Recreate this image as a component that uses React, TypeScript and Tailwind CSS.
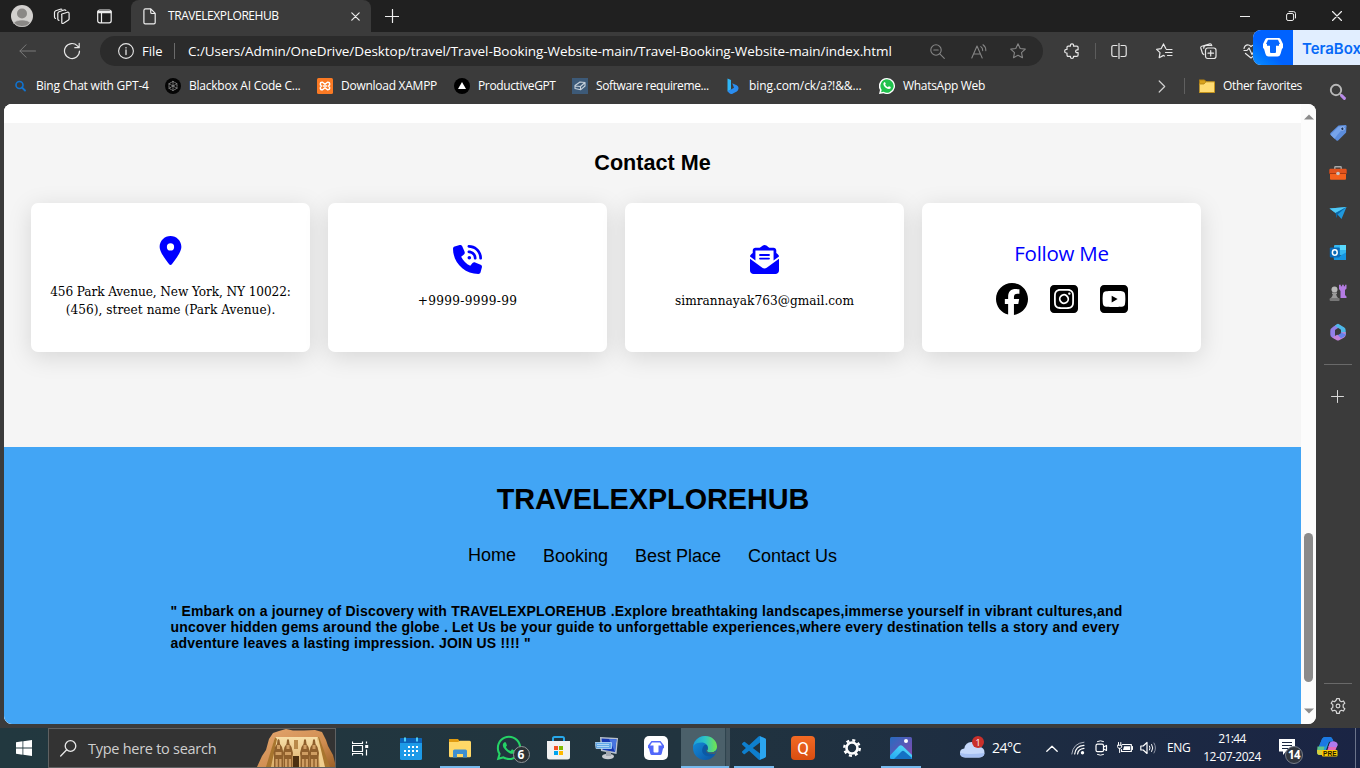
import React, { ReactNode } from "react";
import {
  FaLocationDot,
  FaPhoneVolume,
  FaEnvelopeOpenText,
  FaFacebook,
  FaSquareInstagram,
  FaSquareYoutube,
  FaWhatsapp,
} from "react-icons/fa6";

const UI = "font-['Open_Sans','Noto_Sans',sans-serif]";

type IcProps = { children: ReactNode; className?: string; s?: number; w?: number; h?: number; box?: string };

function Ic({ children, className = "", s = 16, w, h, box }: IcProps) {
  const width = w ?? s;
  const height = h ?? s;
  return (
    <svg
      width={width}
      height={height}
      viewBox={box ?? `0 0 ${width} ${height}`}
      fill="none"
      stroke="currentColor"
      strokeWidth="1"
      strokeLinecap="round"
      strokeLinejoin="round"
      className={`shrink-0 ${className}`}
    >
      {children}
    </svg>
  );
}

function TabStrip() {
  return (
    <div className="flex h-8 shrink-0 items-center bg-[#202020] text-[#eeeeee]">
      <Ic s={22} className="ml-[11px]">
        <circle cx="11" cy="11" r="11" fill="#d2d0ce" stroke="none" />
        <circle cx="11" cy="8.500" r="5" fill="#8a8886" stroke="none" />
        <path d="M2.800 18C4.500 14 17.500 14 19.200 18A11 11 0 0 1 2.800 18Z" fill="#8a8886" stroke="#d2d0ce" strokeWidth=".6" />
      </Ic>
      <Ic w={18} h={17} className="ml-[20px]">
        <path d="M9 6 14.500 4.200q1.600-.3 1.600 1.300v5.200q0 1-1 1.600l-4.600 3q-1.700.7-1.700-.9V7.200Q8.300 6.300 9 6Z" strokeWidth="1.200" />
        <path d="M6 12.300q-1.200 0-1.200-1.500V5.400q0-1.200 1.200-1.700L11 2q1.200-.4 1.800.4M2.500 10.500Q1.500 10.200 1.500 9V4.400q0-1.200 1.200-1.700L7.200 1.200q1-.3 1.600.100" strokeWidth="1.200" />
      </Ic>
      <Ic w={15} h={15} className="ml-[26px]">
        <rect x=".7" y="1" width="13.500" height="12.800" rx="2" strokeWidth="1.200" />
        <path d="M1 2.500h13M1 3.600h13M4.500 4v9.500" strokeWidth="1.200" />
      </Ic>
      <div className="ml-[19px] flex h-8 w-[240px] items-center rounded-t-[8px] bg-[#3b3b3b]">
        <Ic w={13} h={17} className="ml-[12px]">
          <path d="M2.500.9H7.800L12.200 5.400V14.500q0 1.300-1.300 1.300H2.200Q.9 15.800.9 14.500V2.400Q.9.900 2.500.9ZM7.700 1v3.200q0 1.300 1.300 1.300h3.100" strokeWidth="1.200" />
        </Ic>
        <span className="ml-[12px] w-[150px] whitespace-nowrap text-[12px] leading-4 tracking-[-0.43px] text-white">TRAVELEXPLOREHUB</span>
        <Ic s={9} className="ml-[33px]">
          <path d="m.8.8 7.400 7.400M8.200.8.8 8.200" strokeWidth="1.200" />
        </Ic>
      </div>
      <Ic s={14} className="ml-[14px]">
        <path d="M7.500 .5v13M.5 7.500h13" strokeWidth="1.200" />
      </Ic>
      <Ic w={10} h={10} className="ml-[841px]">
        <path d="M0 5.500h10" />
      </Ic>
      <Ic s={10} className="ml-[36px]">
        <rect x=".6" y="2.500" width="7" height="7" rx="1.500" />
        <path d="M3 .6h4.500q2 0 2 2V7" />
      </Ic>
      <Ic s={10} className="ml-[36px]">
        <path d="m.5.5 9 9M9.500.5l-9 9" strokeWidth="1.200" />
      </Ic>
    </div>
  );
}

function AddressRow() {
  return (
    <div className="flex h-[38px] shrink-0 items-center text-[#e6e6e6]">
      <Ic w={17} h={14} className="ml-[19px] text-[#7b7b7b]">
        <path d="M7 .8.900 7 7 13.200M1 7h15.500" />
      </Ic>
      <Ic s={18} className="ml-[27px]">
        <path d="M16.500 9A7.500 7.500 0 1 1 14.400 3.800L16 5.500M16.200 1.300v4.400h-4.400" strokeWidth="1.200" />
      </Ic>
      <div className="ml-[19px] flex h-[30px] w-[943px] items-center rounded-full bg-[#2b2b2b]">
        <Ic s={16} className="ml-[18px]">
          <circle cx="8" cy="8" r="7.400" strokeWidth="1.100" />
          <path d="M8 7v4.500M8 4.600v.3" strokeWidth="1.300" />
        </Ic>
        <span className="ml-[8px] w-[22px] whitespace-nowrap text-[13px] leading-[18px] text-white">File</span>
        <span className="ml-[10px] h-4 w-px bg-[#6b6b6b]" />
        <span className="ml-[13px] w-[742px] whitespace-nowrap text-[13.500px] leading-[18px] tracking-[-0.075px] text-white">
          C:/Users/Admin/OneDrive/Desktop/travel/Travel-Booking-Website-main/Travel-Booking-Website-main/index.html
        </span>
        <Ic s={15} className="text-[#858585]">
          <circle cx="6" cy="6" r="5.200" strokeWidth="1.100" />
          <path d="m9.800 9.800 4.500 4.500M3.800 6h4.400" strokeWidth="1.100" />
        </Ic>
        <Ic w={16} h={15} className="ml-[26px] text-[#858585]">
          <path d="M.8 14 6 2l5.200 12M2.600 10h6.800M9.800 2.600q2 1.300 1.900 4M12 .8q3 2.200 2.800 5.800" strokeWidth="1.100" />
        </Ic>
        <Ic s={16} className="ml-[23px] text-[#858585]">
          <path d="m8 .8 2.200 4.700 5.100.6-3.800 3.500 1 5.100L8 12.200l-4.500 2.500 1-5.100L.700 6.100l5.100-.6Z" strokeWidth="1.100" />
        </Ic>
      </div>
      <Ic w={15} h={16} className="ml-[21px]">
        <path d="M4.200 3.100h2.300q-.4-2.300 1.500-2.300T9.500 3.100h3.300q1.300 0 1.300 1.300v2.400h-1q-1.500 0-1.500 1.400t1.500 1.400h1V12q0 1.300-1.300 1.300H9.500q.3 2-1.500 2t-1.500-2H4.200Q3 13.300 3 12v-2Q.700 10.200.700 8.200T3 6.500V4.300q0-1.200 1.200-1.200Z" strokeWidth="1.200" />
      </Ic>
      <span className="ml-[16px] h-4 w-px bg-[#5c5c5c]" />
      <Ic w={16} h={16} className="ml-[15px]">
        <path d="M6 2.500H2.500Q.8 2.500.8 4.200v7.600q0 1.700 1.700 1.700H6M10 2.500h3.500q1.700 0 1.700 1.700v7.600q0 1.700-1.700 1.700H10M8 .5v15" strokeWidth="1.200" />
      </Ic>
      <Ic w={17} h={16} className="ml-[29px]">
        <path d="M9.800 5.600 7.500.9 5.200 5.600.6 6.300 4 9.700l-.8 5 4.300-2.300 1 .6M10.500 6.500H16M9.500 9.500H16M11.500 12.500H16" strokeWidth="1.200" />
      </Ic>
      <Ic w={17} h={17} className="ml-[27px]">
        <rect x="5.500" y="5" width="10.500" height="10.500" rx="2.200" strokeWidth="1.200" />
        <path d="M10.700 7.500v5.500M8 10.200h5.500M3.800 11.500 2.500 10.500.8 5q-.3-1.300 1-1.700L10 .9q1.300-.2 1.800 1.700M3.700 5.200q0-2.700 2.600-2.700h5.500" strokeWidth="1.200" />
      </Ic>
      <Ic w={16} h={15} className="ml-[26px]">
        <path d="M1 6.500h3L6 4l3 6.500L11 7h4M2.500 9.500 8 14l5.500-4.500M1 4.500Q2 .5 5.500 1 7 1.200 8 2.600 9 1.200 11 1q4 .5 4 4" strokeWidth="1.200" />
      </Ic>
    </div>
  );
}

function Bookmark({ icon, label, w, t }: { icon: ReactNode; label: string; w: string; t: string }) {
  return (
    <div className={`flex shrink-0 items-center ${w}`}>
      <span className="flex w-4 shrink-0 items-center justify-center">{icon}</span>
      <span className={`ml-[8px] whitespace-nowrap text-[12px] leading-4 text-white ${t}`}>{label}</span>
    </div>
  );
}

function BookmarkRow() {
  return (
    <div className="flex h-[34px] shrink-0 items-center pb-[2px] pl-[12px]">
      <Bookmark w="w-[153px]" t="tracking-[-0.22px]" label="Bing Chat with GPT-4" icon={
        <Ic s={12} className="text-[#1173cf]"><circle cx="5.500" cy="5" r="3.500" strokeWidth="1.600" /><path d="m8 7.500 3 3" strokeWidth="1.800" /></Ic>
      } />
      <Bookmark w="w-[152px]" t="tracking-[-0.24px]" label="Blackbox AI Code C..." icon={
        <Ic s={16}><circle cx="8" cy="8" r="8" fill="#050505" stroke="none" /><path d="M8 3.500 12 5.700v4.600L8 12.500 4 10.300V5.700ZM4 5.700l4 2.300 4-2.300M8 8v4.500M8 3.500V8l4 2.300M8 8l-4 2.300" stroke="#999" strokeWidth=".8" strokeDasharray="1 1" /></Ic>
      } />
      <Bookmark w="w-[137px]" t="tracking-[-0.26px]" label="Download XAMPP" icon={
        <Ic s={16}><rect width="16" height="16" rx="1.500" fill="#fb7a24" stroke="none" /><path d="M5 4.200H5.500L8 6.300l2.500-2.100h.5q1.700 0 1.700 1.700 0 1.300-1.200 2.100 1.200.8 1.200 2.100 0 1.700-1.700 1.700h-.5L8 9.700l-2.500 2.100H5q-1.700 0-1.700-1.700Q3.300 8.800 4.500 8 3.300 7.200 3.300 5.900 3.300 4.200 5 4.200Z" stroke="#fff" strokeWidth="1.500" /><path d="M6.200 8h3.600" stroke="#fff" strokeWidth="1.300" /></Ic>
      } />
      <Bookmark w="w-[118px]" t="tracking-[-0.37px]" label="ProductiveGPT" icon={
        <Ic s={16}><circle cx="8" cy="8" r="8" fill="#000" stroke="none" /><path d="m8 4 4 7H4Z" fill="#fff" stroke="none" /></Ic>
      } />
      <Bookmark w="w-[153px]" t="tracking-[-0.4px]" label="Software requireme..." icon={
        <Ic s={16}><rect width="16" height="16" fill="#3d5a78" stroke="none" /><path d="M3 7.500 8 4l5 .5-4.500 4L3 8ZM3 8v2.500l5.500 1.300L13 8V4.500M8.500 8.500v3" stroke="#c8d2dc" strokeWidth="1.100" /></Ic>
      } />
      <Bookmark w="w-[154px]" t="tracking-[-0.08px]" label="bing.com/ck/a?!&&..." icon={
        <Ic s={16}><path d="M2.500.5 6 2v9.500l-3.500 2Z" fill="#2fb6f6" stroke="none" /><path d="m7.200 5.200 4.500 2.100q2 1 1.800 3.200-.2 2-1.700 2.900L7 16q-2.500.5-4.500-3L6 11.500l3-1.800Z" fill="#2a8df0" stroke="none" /></Ic>
      } />
      <Bookmark w="w-[270px]" t="tracking-[-0.3px]" label="WhatsApp Web" icon={
        <Ic s={16}><path d="M8 0a8 8 0 1 1-3.500 15.200L0 16l1-4A8 8 0 0 1 8 0Z" fill="#fff" stroke="none" /><path d="M8 1.300A6.700 6.700 0 1 1 4.600 13.800L2 14.300l.7-2.400A6.700 6.700 0 0 1 8 1.300Z" fill="#1fc24c" stroke="none" /><path d="M5 4.500q.8-.8 1.200 0l.6 1.300-.7 1q1 1.900 2.800 2.500l.9-1q.3-.3 2 .8.200 1.800-1.700 2Q6.800 11 4.700 7.300q-.9-1.700.3-2.800Z" fill="#fff" stroke="none" /></Ic>
      } />
      <Ic w={8} h={13} className="ml-[9px] text-[#d0d0d0]"><path d="m1.200 1 5.500 5.500L1.200 12" strokeWidth="1.200" /></Ic>
      <span className="ml-[18px] h-4 w-px bg-[#606060]" />
      <Ic s={16} className="ml-[14px]">
        <path d="M.5 2h5l1.500 1.500V6H.5Z" fill="#d9a21d" stroke="#b88410" />
        <path d="M.5 6H5l2-2.200h8.500V14.500H.5Z" fill="#ffdc73" stroke="#c4941d" />
      </Ic>
      <span className="ml-[8px] whitespace-nowrap text-[12px] leading-4 tracking-[-0.36px] text-white">Other favorites</span>
    </div>
  );
}

function TeraBadge() {
  return (
    <div className="absolute left-[1253px] top-[30px] flex h-[35px] w-[107px] overflow-hidden rounded-l-[8px] bg-[#e1eeff]">
      <div className="flex w-10 shrink-0 items-center justify-center bg-linear-to-tr from-[#1590ff] to-[#0062ff] to-40%">
        <Ic w={20} h={19}>
          <path d="M4.500 0h11q1.500 0 2.200 1.300L20 6v3.500q0 1-1 1.200L17.500 16q-.7 2.500-3 2.500h-9q-2.300 0-3-2.500L1 10.700Q0 10.500 0 9.500V6l2.300-4.700Q3 0 4.500 0Z" fill="#fff" stroke="none" />
          <path d="M5 1.800h10l2 4.200H3Z" fill="#0567ff" stroke="none" />
          <path d="M4 6h12v1.800h-3V14q0 1-1 1H8q-1 0-1-1V7.800H4Z" fill="#0567ff" stroke="none" />
        </Ic>
      </div>
      <span className="ml-[9px] whitespace-nowrap pt-[9px] font-['Inter',sans-serif] text-[15px] font-semibold leading-5 tracking-[-0.05px] text-[#0669f7]">TeraBox</span>
    </div>
  );
}

const card = "flex h-[149px] w-[279px] shrink-0 flex-col items-center rounded-[7px] bg-white shadow-[0_5px_25px_rgba(0,0,0,0.13)]";
const serif = "font-['DejaVu_Serif_Condensed','DejaVu_Serif','Liberation_Serif',serif]";

function Site() {
  return (
    <main className="flex min-w-0 flex-1 flex-col bg-white text-black">
      <div className="h-[19px] shrink-0 bg-white" />
      <section className="flex h-[324px] shrink-0 flex-col bg-[#f5f5f5]">
        <h2 className="mt-[27px] text-center font-['Liberation_Sans',sans-serif] text-[21.600px] font-bold leading-[26px]">Contact Me</h2>
        <div className="mt-[27px] flex gap-[18px] pl-[27px]">
          <div className={card}>
            <FaLocationDot size={29} color="#0000ff" className="mt-[33px]" />
            <p className={`mt-[17px] whitespace-nowrap text-center text-[13.500px] leading-[18px] tracking-[-0.09px] ${serif}`}>
              456 Park Avenue, New York, NY 10022:<br />
              <span className="tracking-[0.04px]">(456), street name (Park Avenue).</span>
            </p>
          </div>
          <div className={card}>
            <FaPhoneVolume size={29} color="#0000ff" className="mt-[42px]" />
            <p className={`mt-[17px] text-[13.500px] leading-[18px] tracking-[0.3px] ${serif}`}>+9999-9999-99</p>
          </div>
          <div className={card}>
            <FaEnvelopeOpenText size={29} color="#0000ff" className="mt-[42px]" />
            <p className={`mt-[17px] text-[13.500px] leading-[18px] tracking-[0.04px] ${serif}`}>simrannayak763@gmail.com</p>
          </div>
          <div className={card}>
            <h3 className={`mt-[36px] text-[20.500px] leading-7 tracking-[-0.25px] text-[#0000ff] ${UI}`}>Follow Me</h3>
            <div className="mt-[16px] flex h-8 items-center pl-[2px]">
              <FaFacebook size={32} />
              <FaSquareInstagram size={32} className="ml-[20px]" />
              <FaSquareYoutube size={32} className="ml-[18px]" />
            </div>
          </div>
        </div>
      </section>
      <footer className="flex flex-1 flex-col bg-[#42a5f5] font-['Liberation_Sans',sans-serif]">
        <h1 className="mt-[35px] pl-px text-center text-[28.800px] font-bold leading-[34px] tracking-[-0.04px]">TRAVELEXPLOREHUB</h1>
        <nav className="mt-[28px] flex justify-center gap-[27px] text-[18px] leading-[22px]">
          <a>Home</a>
          <a className="pt-px">Booking</a>
          <a className="pt-px">Best Place</a>
          <a className="pt-px">Contact Us</a>
        </nav>
        <p className="mt-[36px] whitespace-nowrap pl-[166.500px] text-[14px] font-bold leading-4 tracking-[0.2px]">
          " Embark on a journey of Discovery with TRAVELEXPLOREHUB .Explore breathtaking landscapes,immerse yourself in vibrant cultures,and<br />
          uncover hidden gems around the globe . Let Us be your guide to unforgettable experiences,where every destination tells a story and every<br />
          adventure leaves a lasting impression. JOIN US !!!! "
        </p>
      </footer>
    </main>
  );
}

function Scrollbar() {
  return (
    <div className="flex w-[15px] shrink-0 flex-col items-center bg-[#fcfcfc]">
      <Ic w={10} h={6} className="mt-[10px]"><path d="M5 .5 10 5.500H0Z" fill="#8b8b8b" stroke="none" /></Ic>
      <div className="mt-[413px] h-[149px] w-[9px] rounded-full bg-[#8b8b8b]" />
      <Ic w={10} h={6} className="mt-[26px]"><path d="M0 .5h10L5 5.500Z" fill="#8b8b8b" stroke="none" /></Ic>
    </div>
  );
}

function Side({ children }: { children: ReactNode }) {
  return <div className="flex h-10 shrink-0 items-center justify-center">{children}</div>;
}

function Sidebar() {
  return (
    <aside className="flex w-11 shrink-0 flex-col text-[#d8d8d8]">
      <div className="-mt-[32px]" />
      <Side>
        <Ic s={18}><circle cx="7" cy="7" r="5.200" stroke="#b9b9b9" strokeWidth="1.900" /><path d="m11 11 2 2" stroke="#aaa" strokeWidth="1.800" /><path d="m12.600 12.600 2.800 2.800" stroke="#b98bea" strokeWidth="3" /></Ic>
      </Side>
      <Side>
        <Ic s={18} className="mt-px"><path d="M9.500 1.500 16.500 1q1 0 1 1.200l-.4 6.300-8 8q-.8.700-1.600 0L1.500 10.700q-.7-.8 0-1.600Z" fill="#5c8ddc" stroke="none" /><path d="m1.500 10.700 8-8 7-1L8.300 11l-2.800 3.700Z" fill="#77a4ea" stroke="none" /><circle cx="13.500" cy="4.800" r="1.700" fill="#16305c" stroke="#a7c8ff" strokeWidth=".8" /></Ic>
      </Side>
      <Side>
        <Ic s={18} className="mt-[2px]"><path d="M5.800 5V3.500Q5.800 2.800 6.500 2.800h5q.7 0 .7.700V5" stroke="#a9a9a9" strokeWidth="1.400" /><rect x=".3" y="4.800" width="17.400" height="4.700" rx="1.200" fill="#e0531e" stroke="none" /><path d="M1 9.500h16V14.700q0 1-1 1H2q-1 0-1-1Z" fill="#f4611d" stroke="none" /><path d="M.5 9.500h17" stroke="#a83a12" /><circle cx="9" cy="9.500" r="1.800" fill="#c7c7c7" stroke="none" /></Ic>
      </Side>
      <Side>
        <Ic s={18} className="mt-px"><path d="M.5 4.500 17.500 3 12.500 15 8.500 10.500Z" fill="#2098dc" stroke="none" /><path d="M.5 4.500 17.500 3 6.500 9Z" fill="#50c8f4" stroke="none" /><path d="m6.500 9 11-6-9 7.500-1 3.800Z" fill="#0968a9" stroke="none" /></Ic>
      </Side>
      <Side>
        <Ic s={18} className="mt-[2px]"><rect x="5" y="1" width="12" height="10" rx="1" fill="#35b8f1" stroke="none" /><path d="M11 1h6v5h-6Z" fill="#58d9fd" stroke="none" /><path d="M4 8.500 10.500 12 17 8.500V16H5Z" fill="#1595e2" stroke="none" /><rect x=".8" y="3.500" width="10" height="10" rx="1" fill="#0969b7" stroke="none" /><ellipse cx="5.800" cy="8.500" rx="2.400" ry="2.700" stroke="#fff" strokeWidth="1.500" /></Ic>
      </Side>
      <Side>
        <Ic s={18} className="mt-px"><circle cx="5.500" cy="5.500" r="3" fill="#b8b8b8" stroke="none" /><path d="M3 8.500h5v1.400H7.200q0 2 1.800 4H2q1.800-2 1.800-4H3Z" fill="#999" stroke="none" /><rect x=".6" y="14" width="10" height="3" rx="1" fill="#777" stroke="none" /><path d="M10 .8h1.800v1.500h1.300V.8h1.700v1.500h1.300V.8H17.500V4.500L16 6v5l1.500 1.500V14h-6V7L10 5Z" fill="#b47ce3" stroke="none" /></Ic>
      </Side>
      <Side>
        <Ic s={18}><path d="M9 .8 4.500 3.400Q1.300 5.300 1.300 8v3.500q0 2 1.800 3l2.900 1.200V7L12 3Z" fill="#9280e8" stroke="none" /><path d="m9 .8 6 3.500q1.700 1 1.700 3V12l-4.700-2.500V6.800L7 3.500 6 2.500Z" fill="#4db8e8" stroke="none" /><path d="m3.200 14.500 8.800-5 4.700-.5v2.700q0 1.800-1.500 2.700l-5 2.800q-1.200.6-2.500 0Z" fill="#c383d9" stroke="none" /><path d="m12 9.500 4.700 1.700q-.4 1.600-1.700 2.500l-3 1.500-3.500-3.500Z" fill="#6482ec" stroke="none" /><path d="M6.300 7.500 9 6l2.700 1.500v3L9 12l-2.700-1.500Z" fill="#3b3b3b" stroke="none" /></Ic>
      </Side>
      <div className="ml-2 mt-[12px] h-px w-7 bg-[#696969]" />
      <Ic s={13} className="ml-[15px] mt-[25px]"><path d="M6.500.5v12M.5 6.500h12" /></Ic>
      <div className="ml-2 mt-auto h-px w-7 bg-[#696969]" />
      <Ic s={18} className="mb-[9px] ml-[13px] mt-[13px]" box="0 0 24 24">
        <path d="M9.700 3 10.200 1.200h3.600l.5 2.800 2.300 1.300 2.700-1 1.800 3.100-2.200 1.800v3.600l2.200 1.800-1.800 3.100-2.700-1-2.300 1.300-.5 2.800h-3.600L9.700 18l-2.300-1.300-2.700 1-1.800-3.100 2.200-1.800V9.200L2.900 7.400l1.800-3.100 2.700 1Z" transform="translate(0 1)" strokeWidth="1.600" />
        <circle cx="12" cy="12" r="2.500" strokeWidth="1.500" />
      </Ic>
    </aside>
  );
}

function Task({ children, bar, active }: { children: ReactNode; bar?: boolean; active?: boolean }) {
  return (
    <div className={`relative flex h-10 w-[49px] shrink-0 items-center justify-center ${active ? "bg-linear-to-r from-[#4b606a] from-90% via-[#293e48] via-91% to-[#43555f] to-93%" : ""}`}>
      {children}
      {bar && <span className="absolute bottom-0 left-[4px] h-[2px] w-10 bg-[#76b9ed]" />}
      {active && <span className="absolute bottom-0 left-0 h-[2px] w-12 bg-[#76b9ed]" />}
    </div>
  );
}

function Temple() {
  return (
    <svg width="78" height="38" viewBox="0 0 78 38" className="shrink-0">
      <defs>
        <linearGradient id="rock" x1="0" y1="0" x2="1" y2="1">
          <stop offset="0" stopColor="#e5a770" />
          <stop offset=".6" stopColor="#cf8d50" />
          <stop offset="1" stopColor="#9a5f26" />
        </linearGradient>
        <linearGradient id="wall" x2="0" y2="1">
          <stop stopColor="#f7dfa8" />
          <stop offset="1" stopColor="#dcae6a" />
        </linearGradient>
      </defs>
      <path d="M0 38 5 27l4-6 3-11 4-6 6-2 7-2 7 1.500L47 1.500l11-.5 7 2 4 8 2 6 5 9 3 12Z" fill="url(#rock)" />
      <path d="M18 8h42l6 30H10Z" fill="url(#wall)" />
      <path d="m18 8-9 30h5l6-28ZM60 8l8 30h5L62 8Z" fill="#a8752e" />
      <path d="m60 8 3 30h5L61 8Z" fill="#f0cf8f" />
      <path d="M36 27h6v11h-6Z" fill="#4c2f10" />
      <path d="M37 11h4v9h-4Z" fill="#b98a4a" />
      {[21.5, 31, 48, 57].map((x) => (
        <g key={x}>
          <path d={`M${x - 4.500} 38v-10l-.5-4 1.500-6 2-3 .5-4 1-1 1 1 .5 4 2 3 1.500 6-.5 4v10Z`} fill="#8f5f2c" />
          <path d={`M${x - 3} 38v-8h2.300v8ZM${x + 0.7} 38v-8h2.300v8ZM${x - 1.500} 16h3v4h-3ZM${x - 3} 23h6v3h-6Z`} fill="#cf9d62" />
        </g>
      ))}
    </svg>
  );
}

function Taskbar() {
  return (
    <div className="flex h-10 shrink-0 items-center bg-linear-to-r from-[#22383f] via-[#21343f] via-50% to-[#1a2444] text-white">
      <div className="flex w-12 shrink-0 justify-center">
        <svg width="16" height="16" viewBox="0 0 16 16" fill="#fff"><path d="m0 2.200 6.500-.9v6.300H0ZM7.300 1.200 16 0v7.600H7.300ZM0 8.400h6.500v6.300L0 13.800ZM7.300 8.400H16V16l-8.700-1.200Z" /></svg>
      </div>
      <div className="flex h-10 w-[288px] shrink-0 items-center overflow-hidden border border-[#5f6162] bg-[#333333]">
        <Ic s={17} className="ml-[11px] text-[#e8e8e8]"><circle cx="10.500" cy="6" r="5.300" strokeWidth="1.300" /><path d="M6.700 9.800.7 16" strokeWidth="1.300" /></Ic>
        <span className="ml-[11px] w-[169px] whitespace-nowrap pt-px text-[14.500px] leading-5 tracking-[-0.27px] text-[#cfcfcf]">Type here to search</span>
        <Temple />
      </div>
      <div className="mr-[2px] flex w-[48.500px] shrink-0 justify-center">
        <Ic w={17} h={15}><path d="M.5.5v2h10v-2M.5 14.500v-2h10v2M.5 4.500h10v6H.5ZM14.500.5v2M14.500 8.500v6" strokeWidth="1.200" strokeLinecap="butt" /><rect x="13.200" y="4" width="3" height="3" fill="#fff" stroke="none" /></Ic>
      </div>
      <Task>
        <Ic w={22} h={23}><rect y="1" width="22" height="22" rx="1.500" fill="#1d9ae8" stroke="none" /><path d="M0 2.500Q0 1 1.500 1h19Q22 1 22 2.500V6H0Z" fill="#0c62b8" stroke="none" /><path d="M5 .5v4M17 .5v4" stroke="#4dd2fb" strokeWidth="2" strokeLinecap="butt" /><path d="M8 10h10M4 14h14M4 18h10" stroke="#fff" strokeWidth="2" strokeDasharray="2 2" strokeLinecap="butt" /></Ic>
      </Task>
      <Task bar>
        <Ic w={22} h={19}><path d="M0 0h9l1.500 2H20v4H0Z" fill="#e09b10" stroke="none" /><path d="M0 3h9l2-1.200h9.500Q22 2 22 3.300V17q0 1.200-1.200 1.200H1.200Q0 18.200 0 17Z" fill="#ffd867" stroke="none" /><path d="M4 18.500V12q0-1.500 1.500-1.500h11q1.500 0 1.500 1.500v6.500h-4V15H8v3.500Z" fill="#3d8fd2" stroke="none" /></Ic>
      </Task>
      <Task>
        <FaWhatsapp size={28} color="#25d366" />
        <span className="absolute left-[28px] top-[18px] flex h-[17px] w-[17px] items-center justify-center rounded-full border border-[#8f9498] bg-[#2b3135] text-[12px] font-bold leading-none">6</span>
      </Task>
      <Task>
        <Ic w={23} h={24}><path d="M6 6V2.500Q6 1 7.500 1h8Q17 1 17 2.500V6" stroke="#28a8ea" strokeWidth="2" /><path d="M0 5h23v16q0 2.500-2.500 2.500h-18Q0 23.500 0 21Z" fill="#f1f1f1" stroke="none" /><path d="M7 10h4v4H7Z" fill="#f25022" stroke="none" /><path d="M12 10h4v4h-4Z" fill="#7fba00" stroke="none" /><path d="M7 15h4v4H7Z" fill="#00a4ef" stroke="none" /><path d="M12 15h4v4h-4Z" fill="#ffb900" stroke="none" /></Ic>
      </Task>
      <Task>
        <Ic s={24}><path d="m5 1 18 1-1.500 16L6 15Z" fill="#b8c2cf" stroke="none" /><path d="m6.500 2.500 15 .8L20 16 7.500 13.700Z" fill="#1638b2" stroke="none" /><path d="m14 3 7.500.3L20 16Z" fill="#4774df" stroke="none" /><ellipse cx="13" cy="20.500" rx="6" ry="2.700" fill="#c7cbd0" stroke="none" /><path d="M11 15h5v5h-5Z" fill="#a2a8b0" stroke="none" /><path d="M.5 6.500h16v6H1.500Z" fill="#62a9e8" stroke="#b9dcfa" strokeWidth=".8" /><path d="M2.500 8.500h12M2.500 10.500h12" stroke="#fff" strokeDasharray="1 1" strokeLinecap="butt" /></Ic>
      </Task>
      <Task>
        <Ic s={24}><rect width="24" height="24" rx="5" fill="#fff" stroke="none" /><path d="M7.500 5h9L20 9.500V12l-1 .5-1.200 5q-.3 1.500-1.800 1.500H8q-1.500 0-1.800-1.500L5 12.500 4 12V9.500Z" fill="#5268fa" stroke="none" /><path d="m8 6.500-2 3h3.500v6q0 1 1 1h3q1 0 1-1v-6H18l-2-3Z" fill="#fff" stroke="none" /></Ic>
      </Task>
      <Task active>
        <svg width="24" height="24" viewBox="0 0 24 24">
          <defs>
            <linearGradient id="et" x1="0" x2="1"><stop stopColor="#1b9cda" /><stop offset=".5" stopColor="#2ec5c5" /><stop offset="1" stopColor="#74e64a" /></linearGradient>
            <linearGradient id="eb" x2="1" y2="1"><stop stopColor="#1493df" /><stop offset="1" stopColor="#0b4fa0" /></linearGradient>
          </defs>
          <circle cx="12" cy="12" r="12" fill="url(#eb)" />
          <path d="M.3 10C1.200 4.500 6 0 12 0c7 0 12 5 12 10.500 0 4-3 6-6.300 6-2.500 0-3.700-.8-3.700-1.800 0-.8.900-1 .9-2.700C14.900 9 12.500 6.500 8.500 6.500 5 6.500 2 7.500.3 10Z" fill="url(#et)" />
          <path d="M14.900 12c0 1.700-.9 1.900-.9 2.700 0 1 1.200 1.800 3.700 1.800 2.300 0 4-.8 4.900-1.800Q21 19 18 20q-5 1-7.500-2T10 11q1.500-3 4-2Z" fill="#0c59a4" />
          <path d="M14.900 12c0 1.700-.9 1.900-.9 2.700 0 1 1.200 1.800 3.700 1.800 2.300 0 5-.8 6-2.500-.6 1.800-1.200 2.800-1.800 4Q19 17.800 16 17.500 11 16 14.900 12Z" fill="#4b606a" />
        </svg>
      </Task>
      <Task bar>
        <svg width="24" height="24" viewBox="0 0 24 24">
          <path d="M23.150 2.587L18.210.21a1.494 1.494 0 0 0-1.705.29l-9.460 8.630-4.120-3.128a.999.999 0 0 0-1.276.057L.327 7.261A1 1 0 0 0 .326 8.740L3.899 12 .326 15.260a1 1 0 0 0 .001 1.479L1.650 17.940a.999.999 0 0 0 1.276.057l4.120-3.128 9.460 8.630a1.492 1.492 0 0 0 1.704.290l4.942-2.377A1.500 1.500 0 0 0 24 20.060V3.939a1.500 1.500 0 0 0-.850-1.352zm-5.146 14.861L10.826 12l7.178-5.448v10.896z" fill="#0e7fce" />
          <path d="M18 .2 23.200 2.600Q24 3 24 4v16q0 1-.8 1.400L18 23.800Z" fill="#2ba5ef" />
        </svg>
      </Task>
      <Task>
        <span className="flex h-6 w-6 items-center justify-center rounded-[4px] bg-linear-to-b from-[#f26a24] to-[#d94d10] font-['Roboto',sans-serif] text-[17px] leading-none">Q</span>
      </Task>
      <Task>
        <Ic s={18}><circle cx="9" cy="9" r="5.500" strokeWidth="2.600" /><circle cx="9" cy="9" r="7.700" strokeWidth="2.500" strokeDasharray="3 3.050" strokeLinecap="butt" /></Ic>
      </Task>
      <Task bar>
        <svg width="22" height="22" viewBox="0 0 22 22">
          <defs>
            <linearGradient id="ph" x2="1" y2="1"><stop stopColor="#276cc0" /><stop offset=".6" stopColor="#6155b5" /><stop offset="1" stopColor="#8a4ab0" /></linearGradient>
            <linearGradient id="mt" y1="1" x2="1" y2="0"><stop stopColor="#22a6f0" /><stop offset="1" stopColor="#5be3fb" /></linearGradient>
          </defs>
          <rect width="22" height="22" rx="1.500" fill="url(#ph)" />
          <path d="m0 18.500 9-9.500q1.800-1.600 3.600 0L22 18v2.500q0 1.500-1.500 1.500h-19Q0 22 0 20.500Z" fill="url(#mt)" />
          <path d="m4 22 7.500-7.500q1.500-1.300 3 0L22 21v-.5q0 1.500-1.500 1.500Z" fill="#1471c4" />
          <circle cx="16" cy="4" r="2" fill="#fff" />
        </svg>
      </Task>
      <div className="relative ml-[34.500px] flex h-10 w-[27px] shrink-0 items-center">
        <Ic w={25} h={17} className="mt-[2px]"><path d="M5.500 16.500Q0 16.300 0 11.800 0 8 4.300 7.500 5.500 1 11.500 1q5 0 6.500 5 6.500-.3 6.500 5.500 0 4.700-5.500 5Z" fill="#c5d8fb" stroke="none" /><path d="M5.500 16.500Q0 16.300 0 12q8 2 24.500 0-.5 4.300-5.500 4.500Z" fill="#a6c0f3" stroke="none" /></Ic>
        <span className="absolute left-[12px] top-[8px] flex h-3 w-3 items-center justify-center rounded-full bg-[#c9302b] text-[9px] leading-none">1</span>
      </div>
      <span className="ml-[5px] w-[30px] shrink-0 whitespace-nowrap text-[14px] leading-5 tracking-[-0.5px]">24°C</span>
      <Ic w={12} h={7} className="ml-[24px]"><path d="m.8 6.300 5.200-5 5.200 5" strokeWidth="1.300" /></Ic>
      <Ic s={14} className="ml-[13px]"><path d="M.8 13Q2 2.200 13 1.200" stroke="#aab0bc" /><path d="M3.700 13Q4.500 5 13 4.300M6.600 13Q7 8 13 7.300" strokeWidth="1.200" /><circle cx="11.500" cy="11.800" r="1.700" fill="#fff" stroke="none" /></Ic>
      <Ic w={13} h={16} className="ml-[10px]"><path d="M2.500 1.500q3-1.500 6 0M2.500 14.500q3 1.500 6 0" /><rect x="1" y="4.200" width="7.500" height="7.500" rx="1.500" strokeWidth="1.200" /><path d="m8.500 7 3-1.500v5l-3-1.500" strokeWidth="1.200" /></Ic>
      <Ic w={16} h={12} className="ml-[9px]"><path d="M5.500 2.500h8.800v7H4.500V7.500" strokeWidth="1.200" /><path d="M7 4.200h6v3.800H6Z" fill="#fff" stroke="none" /><path d="M15.500 4.500v3M1.500.5v2.500M3.800.5v2.500M.7 3.200h4V5L3.500 6.300h-2L.700 5ZM2.600 6.500v4" /></Ic>
      <Ic w={17} h={14} className="ml-[7px]"><path d="M.8 5h2.400L7 1.500v11L3.200 9H.8Z" strokeWidth="1.200" /><path d="M9.500 5q1.200 2 0 4M11.700 3.500q2.300 3.500 0 7" /><path d="M14 2q3 5 0 10" stroke="#8c92a3" /></Ic>
      <span className="ml-[10px] w-[25px] shrink-0 text-[12px] leading-4 tracking-[-0.4px]">ENG</span>
      <div className="ml-[10px] flex w-[60px] shrink-0 flex-col items-center whitespace-nowrap text-[12px] leading-[18px] tracking-[-0.5px]">
        <span className="tracking-[-0.6px]">21:44</span>
        <span>12-07-2024</span>
      </div>
      <div className="relative ml-[17px] flex h-10 w-[26px] shrink-0 items-center">
        <Ic w={16} h={17} className="mb-[2px]"><path d="M0 0h16v12.500H7L4 16v-3.500H0Z" fill="#fff" stroke="none" /><path d="M3 3.500h10M3 6.500h10M3 9.500h6" stroke="#1c2842" strokeLinecap="butt" /></Ic>
        <span className="absolute left-[6px] top-[18px] flex h-[18px] w-[18px] items-center justify-center rounded-full border border-[#777d88] bg-[#30353e] text-[11.500px] font-bold leading-none tracking-[-0.5px]">14</span>
      </div>
      <svg width="22" height="22" viewBox="0 0 22 22" className="ml-[12px] shrink-0">
        <path d="M5 2q1-2 3.500-2H13q2 0 2.700 2.500l.8 2H12L8 16q-1 2-3 2H3q-3 0-3-3.500Z" fill="#239edb" />
        <path d="M5 2q1-2 3.500-2H13q2 0 2.700 2.500l.8 2H12L8 10H1.800Z" fill="#1b78e4" />
        <path d="M.5 9.500h7L5.500 18H3q-3 0-3-3.500Z" fill="#5fc68a" />
        <path d="M0 13h6.500L5 18H3q-3 0-3-3.500Z" fill="#d8ce39" />
        <path d="M16 4.500q4.500 0 4.500 3.500L17 17H9l3.500-10Q13.500 4.500 16 4.500Z" fill="#e769b7" />
        <path d="M13 5.500q1-1 3-1 4.500 0 4.500 3.500l-.7 2h-8.500Z" fill="#b07aef" />
        <rect x="5" y="13" width="15.500" height="6.500" rx="1" fill="#ffc900" />
        <text x="12.800" y="18.600" textAnchor="middle" fontSize="6.500" fontWeight="bold" fontFamily="Liberation Sans" fill="#201a00">PRE</text>
      </svg>
      <span className="ml-auto mr-[4px] h-10 w-px bg-[#6b748a]" />
    </div>
  );
}

export default function App() {
  return (
    <div className={`relative flex h-[768px] w-[1360px] flex-col overflow-hidden bg-[#3b3b3b] ${UI}`}>
      <TabStrip />
      <AddressRow />
      <BookmarkRow />
      <div className="flex h-[620px] shrink-0 pl-1">
        <div className="flex w-[1312px] shrink-0 overflow-hidden rounded-[8px] bg-white">
          <Site />
          <Scrollbar />
        </div>
        <Sidebar />
      </div>
      <div className="h-1 shrink-0" />
      <Taskbar />
      <TeraBadge />
    </div>
  );
}
